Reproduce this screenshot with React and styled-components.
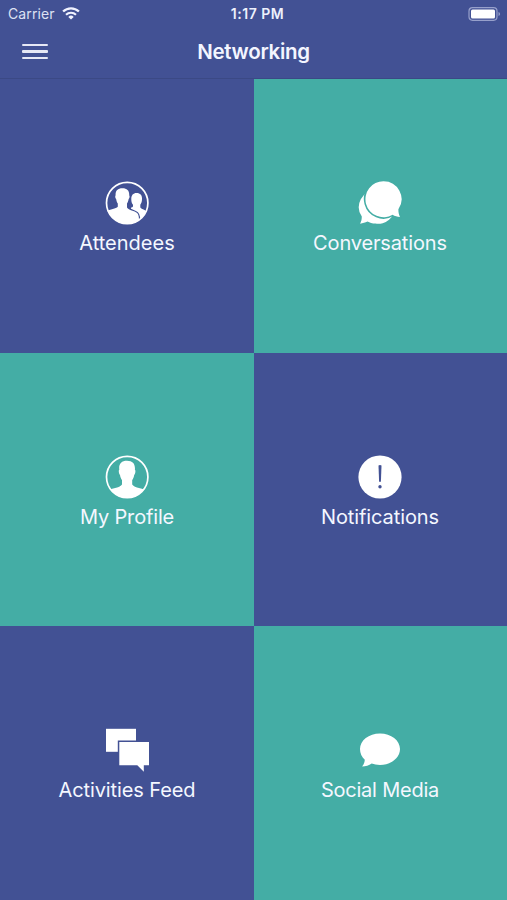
import React from "react";
import styled, { createGlobalStyle } from "styled-components";

const BLUE = "#425194";
const TEAL = "#44ada5";

const GlobalStyle = createGlobalStyle`
  body {
    margin: 0;
    background-color: ${BLUE};
    font-family: Inter, "Liberation Sans", sans-serif;
    color: white;
  }
`;

const Screen = styled.div`
  display: flex;
  flex-direction: column;
  height: 100vh;
  overflow: hidden;
`;

const StatusBar = styled.div`
  display: grid;
  grid-template-columns: 1fr auto 1fr;
  align-items: center;
  height: 28px;
  box-sizing: border-box;
  padding: 0 6px 0 8px;
`;
const Carrier = styled.div`
  display: flex;
  align-items: center;
  gap: 7px;
  font-size: 14px;
  line-height: 16px;
  margin-bottom: 1px;
  letter-spacing: 0.12px;
  color: #dde1f3;
`;
const Time = styled.div`
  font-size: 14px;
  line-height: 16px;
  font-weight: 600;
  letter-spacing: 0.5px;
  padding-left: 6px;
  color: #edf0fc;
`;
const Battery = styled.svg`
  justify-self: end;
  margin-bottom: 1px;
`;

const NavBar = styled.header`
  display: grid;
  grid-template-columns: 1fr auto 1fr;
  align-items: center;
  height: 51px;
  box-sizing: border-box;
  padding: 0 22px 3px;
  border-bottom: 1px solid #3b4985;
`;
const MenuButton = styled.button`
  display: flex;
  flex-direction: column;
  gap: 4px;
  width: 26px;
  padding: 0;
  border: none;
  background-color: transparent;
  span {
    height: 2.4px;
    border-radius: 1px;
    background-color: #e6e8f6;
  }
`;
const Title = styled.h1`
  margin: 0;
  font-size: 20.5px;
  line-height: 24px;
  font-weight: 600;
  letter-spacing: -0.3px;
  color: #f3f5ff;
`;

const Grid = styled.main`
  flex: 1;
  display: grid;
  grid-template-columns: 254px 1fr;
  grid-template-rows: repeat(3, 1fr);
`;
const Tile = styled.a`
  display: flex;
  flex-direction: column;
  align-items: center;
  padding-top: 102px;
  background-color: ${(props) => (props.$teal ? TEAL : BLUE)};
  &:nth-child(even) {
    padding-right: 1px;
  }
`;
const TileIcon = styled.svg`
  width: 44px;
  height: 44px;
  fill: white;
`;
const Label = styled.span`
  margin-top: 6px;
  font-size: 20px;
  line-height: 24px;
  white-space: nowrap;
  letter-spacing: ${(props) => props.$spacing || 0}px;
  color: #f4f7ff;
`;

const AttendeesIcon = () => (
  <TileIcon viewBox="0 0 44 44">
    <clipPath id="attendees">
      <circle cx="22" cy="22" r="21" />
    </clipPath>
    <g clipPath="url(#attendees)">
      <path d="M31.6 12c3.9 0 5.600 2.500 5.400 6 0 2.700-.6 4.300-1.700 5.700v2.700c1.500 1.900 4.800 2 6.800 4.600V44H26V26.600c1 0 1.700-.5 2-1V23.700c-1.200-1.400-1.800-3.400-1.700-5.700-.1-3.500 1.700-6 5.300-6z" />
      <path
        d="M17.400 7.300c4.900 0 7.100 2.700 6.800 7.200.6.200.5 2.700-.6 3.700-.3 2-1 3.300-1.600 4.200v4c1.800 3 7.500 3 10.100 5.600 2 2 2 5 2 12H-2V31c4-2 12.500-2.700 14.800-5.200v-3.400c-.8-1-1.300-2.200-1.600-4.200-1.100-1-1.200-3.500-.6-3.700-.3-4.500 1.900-7.200 6.800-7.200z"
        stroke={BLUE}
        strokeWidth="2.400"
        paintOrder="stroke"
      />
    </g>
    <circle cx="22.200" cy="22" r="20.700" fill="none" stroke="white" strokeWidth="1.700" />
  </TileIcon>
);

const ConversationsIcon = () => (
  <TileIcon viewBox="0 0 44 44">
    <path d="M17.500 9.200a16.900 16.900 0 1 1 0 33.400c-3.300 0-5.800-.8-8-2.100-2.200.9-4.700 1.800-7.400 2.200 1.300-2.300 1.700-4.600 1.700-7.100A16.900 16.900 0 0 1 17.500 9.200z" />
    <path
      d="M25.500 0.200a18 18 0 0 1 14.900 28.100c-.1 2.500.4 4.900 1.600 7.700-2.700-.2-5.300-.9-7.400-2.300A18 18 0 1 1 25.500 0.200z"
      stroke={TEAL}
      strokeWidth="3.200"
      paintOrder="stroke"
    />
  </TileIcon>
);

const ProfileIcon = () => (
  <TileIcon viewBox="0 0 44 44">
    <clipPath id="profile">
      <circle cx="22" cy="22" r="21" />
    </clipPath>
    <path
      clipPath="url(#profile)"
      d="M22 5.700c5.900 0 8.400 3.300 7.900 9 .9.300.6 4.100-.7 5.200-.4 2.500-1.200 4-2 5.100v4.600c2 3.400 9 3.100 13.400 6.100V44h-37v-8.300c4.400-3 11.400-2.700 13.400-6.100V25c-.8-1.100-1.600-2.600-2-5.100-1.300-1.100-1.600-4.900-.7-5.200C13.600 9 16.100 5.700 22 5.700z"
    />
    <circle cx="22.200" cy="22" r="20.700" fill="none" stroke="white" strokeWidth="1.700" />
  </TileIcon>
);

const NotificationsIcon = () => (
  <TileIcon viewBox="0 0 44 44">
    <circle cx="22" cy="22" r="21.600" />
    <path d="M20.500 10.500q1.500-.8 3 0L22.900 26.800h-1.800z" fill={BLUE} />
    <circle cx="22" cy="31.800" r="1.700" fill={BLUE} />
  </TileIcon>
);

const FeedIcon = () => (
  <TileIcon viewBox="0 0 44 44">
    <path d="M1 .8h30v23H1z" />
    <path
      d="M14.300 14h30v23.300h-5.500v6.500l-6.500-6.500h-18z"
      stroke={BLUE}
      strokeWidth="3"
      paintOrder="stroke"
    />
  </TileIcon>
);

const SocialIcon = () => (
  <TileIcon viewBox="0 0 44 44">
    <path d="M22 5.400c11.200 0 20 6.900 20 15.700s-8.800 15.800-20 15.800c-3.200 0-6-.5-8.300-1.400-2.700 1.800-6 3-9.600 3.100 1.500-2 2.600-4.300 2.700-6.800C3.700 29 2 25.400 2 21.100 2 12.300 10.800 5.400 22 5.400z" />
  </TileIcon>
);

const tiles = [
  { label: "Attendees", icon: AttendeesIcon, spacing: 0 },
  { label: "Conversations", icon: ConversationsIcon, teal: true, spacing: -0.15 },
  { label: "My Profile", icon: ProfileIcon, teal: true, spacing: -0.15 },
  { label: "Notifications", icon: NotificationsIcon, spacing: -0.1 },
  { label: "Activities Feed", icon: FeedIcon, spacing: -0.1 },
  { label: "Social Media", icon: SocialIcon, teal: true, spacing: -0.22 },
];

const App = () => {
  return (
    <Screen>
      <GlobalStyle />
      <StatusBar>
        <Carrier>
          Carrier
          <svg width="18" height="13" viewBox="0 0 18 13" fill="none" stroke="#f1f3ff">
            <path d="M1.100 4.500a11.300 11.300 0 0 1 15.800 0" strokeWidth="2.300" />
            <path d="M4 7.700a7.200 7.200 0 0 1 10 0" strokeWidth="2.100" />
            <path d="M9 12.600 6.300 9.900a3.900 3.900 0 0 1 5.400 0z" fill="#f1f3ff" stroke="none" />
          </svg>
        </Carrier>
        <Time>1:17 PM</Time>
        <Battery width="33" height="14" viewBox="0 0 33 14">
          <rect x="1" y=".7" width="28" height="12.600" rx="3.500" fill="none" stroke="#97a0cb" strokeWidth="1.200" />
          <rect x="3" y="2.600" width="24" height="8.800" rx="1.500" fill="white" />
          <path d="M30.500 4.900q1.600.6 1.600 2.100t-1.600 2.100z" fill="#97a0cb" />
        </Battery>
      </StatusBar>
      <NavBar>
        <MenuButton aria-label="Menu">
          <span />
          <span />
          <span />
        </MenuButton>
        <Title>Networking</Title>
      </NavBar>
      <Grid>
        {tiles.map(({ label, icon: Icon, teal, spacing }) => (
          <Tile key={label} $teal={teal}>
            <Icon />
            <Label $spacing={spacing}>{label}</Label>
          </Tile>
        ))}
      </Grid>
    </Screen>
  );
};

export default App;
